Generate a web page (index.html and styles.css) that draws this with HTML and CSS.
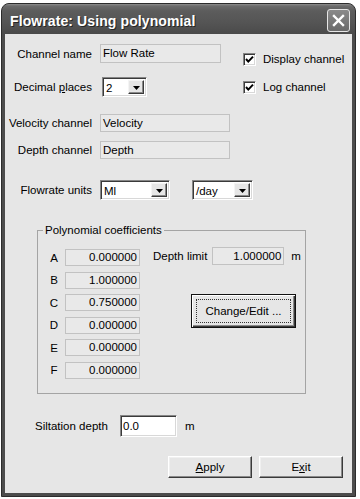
FILE: index.html
```html
<!DOCTYPE html>
<html lang="en">
 <head>
	<title>Flowrate: Using polynomial</title>
	<meta charset="utf-8"/>
	<link rel="stylesheet" href="styles.css">
 </head>

 <body>
	<div id="wrap">
		<div class="window">
			<div class="titlebar">
				<h1>Flowrate: Using polynomial</h1>
				<a href="#" class="close" title="close">
					<svg width="23" height="23" viewBox="0 0 23 23">
						<path d="M7 7 L16 16 M16 7 L7 16" stroke="#fff" stroke-width="2.4" stroke-linecap="square"/>
					</svg>
				</a>
			</div>

			<div class="client">
				<div class="top">
					<div class="fields">
						<div class="row r-name">
							<label>Channel name</label>
							<span class="edit ro name">Flow Rate</span>
						</div>
						<div class="row r-dec">
							<label>Decimal <u>p</u>laces</label>
							<span class="combo dec"><span class="val">2</span><span class="drop"><svg width="7" height="4" viewBox="0 0 7 4"><path d="M0 0 H7 L3.5 4 Z" fill="#000"/></svg></span></span>
						</div>
					</div>
					<ul class="checks">
						<li><span class="chk"><svg width="11" height="11" viewBox="0 0 11 11"><path d="M2 5 L4.3 7.6 L9 2.6" fill="none" stroke="#000" stroke-width="2"/></svg></span>Display channel</li>
						<li><span class="chk"><svg width="11" height="11" viewBox="0 0 11 11"><path d="M2 5 L4.3 7.6 L9 2.6" fill="none" stroke="#000" stroke-width="2"/></svg></span>Log channel</li>
					</ul>
				</div>

				<div class="row r-vel">
					<label>Velocity channel</label>
					<span class="edit ro chan">Velocity</span>
				</div>
				<div class="row r-depth">
					<label>Depth channel</label>
					<span class="edit ro chan">Depth</span>
				</div>
				<div class="row r-units">
					<label>Flowrate units</label>
					<span class="combo ml"><span class="val">Ml</span><span class="drop"><svg width="7" height="4" viewBox="0 0 7 4"><path d="M0 0 H7 L3.5 4 Z" fill="#000"/></svg></span></span>
					<span class="combo day"><span class="val">/day</span><span class="drop"><svg width="7" height="4" viewBox="0 0 7 4"><path d="M0 0 H7 L3.5 4 Z" fill="#000"/></svg></span></span>
				</div>

				<fieldset class="group">
					<legend>Polynomial coefficients</legend>
					<div class="coef">
						<div class="c-row"><span class="letter">A</span><span class="edit ro num">0.000000</span></div>
						<div class="c-row"><span class="letter">B</span><span class="edit ro num">1.000000</span></div>
						<div class="c-row"><span class="letter">C</span><span class="edit ro num">0.750000</span></div>
						<div class="c-row"><span class="letter">D</span><span class="edit ro num">0.000000</span></div>
						<div class="c-row"><span class="letter">E</span><span class="edit ro num">0.000000</span></div>
						<div class="c-row"><span class="letter">F</span><span class="edit ro num">0.000000</span></div>
					</div>
					<div class="limit">
						<div class="l-row">
							<label>Depth limit</label>
							<span class="edit ro num lim">1.000000</span>
							<span class="unit">m</span>
						</div>
						<a href="#" class="btn default" title="change">
							<span class="focus">Change/Edit ...</span>
						</a>
					</div>
				</fieldset>

				<div class="row r-silt">
					<label>Siltation depth</label>
					<span class="edit silt">0.0</span>
					<span class="unit">m</span>
				</div>

				<div class="actions">
					<a href="#" class="btn" title="apply"><u>A</u>pply</a>
					<a href="#" class="btn" title="exit">E<u>x</u>it</a>
				</div>
			</div>
		</div>
	</div>
 </body>
</html>
```

FILE: styles.css
```css
*{margin:0; padding:0;}
li{list-style-type:none;}
a:link,a:visited{text-decoration:none; color:#000;}

body{background:#fff; font-family:"Liberation Sans", Arial, sans-serif; font-size:11.5px; color:#000;}

/*######### wrap / window frame #########*/
	#wrap{padding:3px 0 0 1px;}
	.window{width:355px; height:494px; box-sizing:border-box; display:flex; flex-direction:column; background:#4c4c4c; border:1px solid #2c2c2c; border-radius:8px 8px 0 0; overflow:hidden;}

/*######### titlebar #########*/
	.titlebar{height:30px; flex:none; display:flex; justify-content:space-between; align-items:flex-start; padding:0 5px 0 8px; background:linear-gradient(#8e8e8e 0, #6c6c6c 2px, #5c5c5c 7px, #555 60%, #4a4a4a 100%);}
	.titlebar h1{padding-top:9px; font-size:14px; line-height:17px; font-weight:700; color:#fff; text-shadow:1px 1px 0 #262626; letter-spacing:0.1px;}
	.close{display:block; width:21px; height:21px; margin-top:5px; border:1px solid #e6e6e6; border-radius:3px; background:linear-gradient(#8a8a8a, #6a6a6a);}
	.close svg{display:block; margin:-1px;}

/*######### client area #########*/
	.client{flex:1; margin:0 3px 3px; background:#e6e6e6; padding-top:10px;}

	.row{display:flex; align-items:center;}
	.row label{width:87px; margin-right:8px; text-align:right; white-space:nowrap;}

/* edit boxes */
	.edit{display:block; box-sizing:border-box; padding:0 2px; white-space:nowrap; overflow:hidden;}
	.edit.ro{background:#e9e9e9; border:1px solid #c2c2c2;}
	.edit.num{text-align:right; padding-right:2px;}

/* sunken combo / white edit */
	.combo, .edit.silt{display:flex; box-sizing:border-box; background:#fff; border:1px solid; border-color:#868686 #fff #fff #868686; box-shadow:inset 1px 1px #3a3a3a, inset -1px -1px #d8d8d8;}
	.combo{height:20px; padding:2px;}
	.combo .val{flex:1; padding-left:1px; line-height:16px;}
	.combo .drop{width:16px; box-sizing:border-box; display:flex; align-items:center; justify-content:center; background:#e6e6e6; border:1px solid; border-color:#f4f4f4 #3a3a3a #3a3a3a #f4f4f4; box-shadow:inset -1px -1px #8a8a8a;}
	.combo .drop svg{display:block; margin-top:1px;}

/*######### top section #########*/
	.top{display:flex;}
	.fields{width:216px;}
	.r-name{height:19px;}
	.r-name .name{width:121px; height:19px; line-height:17px;}
	.r-dec{height:20px; margin-top:14px;}
	.r-dec .dec{width:45px; margin-left:2px;}

	.checks{margin-left:22px; padding-top:9px;}
	.checks li{display:flex; align-items:center; height:13px; line-height:13px; white-space:nowrap;}
	.checks li + li{margin-top:15px;}
	.chk{width:13px; height:13px; box-sizing:border-box; margin-right:7px; background:#fff; border:1px solid; border-color:#868686 #fff #fff #868686; box-shadow:inset 1px 1px #3a3a3a, inset -1px -1px #d8d8d8;}
	.chk svg{display:block; margin:0;}

/*######### channel rows #########*/
	.r-vel{height:18px; margin-top:17px;}
	.r-depth{height:18px; margin-top:9px;}
	.chan{width:130px; height:18px; line-height:16px;}
	.r-units{height:20px; margin-top:21px;}
	.r-units .ml{width:70px;}
	.r-units .day{width:61px; margin-left:22px;}

/*######### polynomial group #########*/
	.group{width:269px; box-sizing:border-box; margin:23px 0 0 32px; padding:12px 0 14px; border:1px solid #a4a4a4; display:flex; min-inline-size:0;}
	.group legend{margin-left:5px; padding:0 2px; line-height:14px; background:#e6e6e6;}

	.coef{padding-left:7px;}
	.c-row{display:flex; align-items:center; height:17px;}
	.c-row + .c-row{margin-top:5.6px;}
	.letter{width:18px; margin-right:2px; text-align:center;}
	.c-row .num{width:75px; height:17px; line-height:15px;}

	.limit{display:flex; flex-direction:column; align-items:flex-start; margin:-2px 0 0 13px;}
	.l-row{display:flex; align-items:center; height:18px;}
	.l-row label{margin-right:5px;}
	.l-row .lim{width:72px; height:18px; line-height:16px;}
	.unit{margin-left:7px;}

/*######### buttons #########*/
	.btn{display:flex; align-items:center; justify-content:center; box-sizing:border-box; background:#e6e6e6; border:1px solid; border-color:#fff #3a3a3a #3a3a3a #fff; box-shadow:inset -1px -1px #8a8a8a, inset 1px 1px #f0f0f0;}
	.btn.default{width:105px; height:34px; margin:29px 0 0 38px; border:1px solid #111; box-shadow:inset 1px 1px #fff, inset -1px -1px #3a3a3a, inset -2px -2px #8a8a8a; padding:4px;}
	.btn .focus{display:flex; align-items:center; justify-content:center; width:100%; height:100%; border:1px dotted #333; box-sizing:border-box;}

/*######### siltation #########*/
	.r-silt{height:22px; margin:21px 0 0 30px;}
	.r-silt label{width:78px; margin-right:7px; text-align:left;}
	.edit.silt{width:57px; height:22px; line-height:18px; padding:1px 2px;}
	.r-silt .unit{margin-left:8px;}

/*######### apply / exit #########*/
	.actions{display:flex; justify-content:flex-end; gap:7px; margin-top:19px; padding-right:9px;}
	.actions .btn{width:84px; height:22px;}
```
